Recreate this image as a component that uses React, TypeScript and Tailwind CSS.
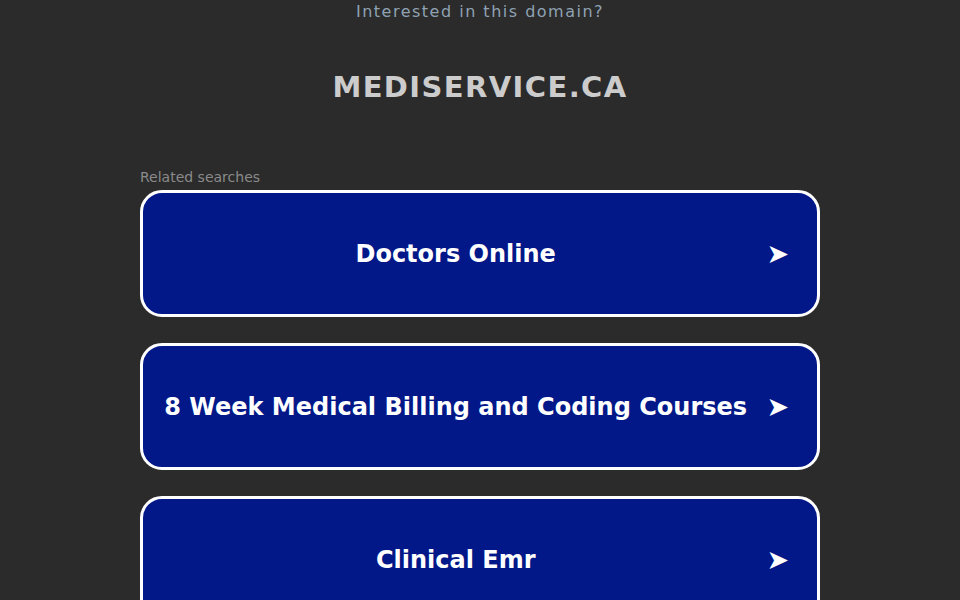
const searches = ['Doctors Online', '8 Week Medical Billing and Coding Courses', 'Clinical Emr'];

export default function App() {
  return (
    <div className="min-h-screen bg-[#2b2b2b] font-['DejaVu_Sans',sans-serif] overflow-hidden h-[600px]">
      <div className="text-center text-[16px] leading-[24px] tracking-[1.5px] text-[#8fa2b3]">Interested in this domain?</div>

      <h1 className="mt-[45px] text-center text-[29px] font-bold leading-[36px] tracking-[1.4px] text-[#cccccc]">MEDISERVICE.CA</h1>

      <div className="mx-auto mt-[63px] w-[680px]">
        <div className="text-[14px] leading-[18px] text-[#8a8a8a]">Related searches</div>
        <div className="mt-[4px] flex flex-col gap-[26px]">
          {searches.map((s) => (
            <a
              key={s}
              href="#"
              className="flex h-[127px] items-center rounded-[22px] border-[3px] border-white bg-[#021888] pl-[21px] pr-[28px] text-white"
            >
              <span className="flex-1 whitespace-nowrap pt-[1px] text-center text-[24px] font-bold">{s}</span>
              <span className="ml-[19px] text-[27px] leading-none">➤</span>
            </a>
          ))}
        </div>
      </div>
    </div>
  );
}
